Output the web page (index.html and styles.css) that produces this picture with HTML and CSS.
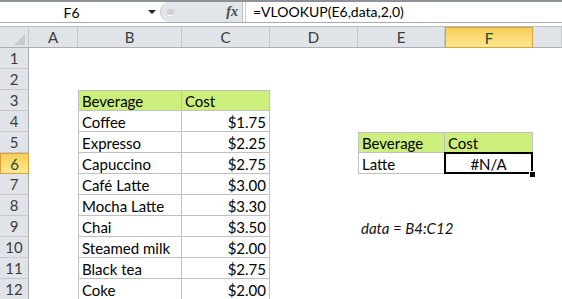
FILE: index.html
```html
<!DOCTYPE html>
<html lang="en">

<head>
    <meta charset="UTF-8">
    <title>VLOOKUP #N/A</title>
    <link rel="stylesheet" href="styles.css">
</head>

<body>
    <div class="frame-top"></div>

    <div class="formula-bar">
        <div class="name-box">
            <span class="name">F6</span>
            <span class="caret"></span>
        </div>
        <div class="fx-area">
            <span class="knob"></span>
            <span class="fx">fx</span>
        </div>
        <div class="formula">=VLOOKUP(E6,data,2,0)</div>
    </div>
    <div class="bar-gap"></div>

    <table class="sheet">
        <colgroup>
            <col class="c-rh">
            <col class="c-a">
            <col class="c-b">
            <col class="c-c">
            <col class="c-d">
            <col class="c-e">
            <col class="c-f">
            <col>
        </colgroup>
        <thead>
            <tr>
                <th class="corner"><span class="corner-mark"></span></th>
                <th>A</th>
                <th>B</th>
                <th>C</th>
                <th>D</th>
                <th>E</th>
                <th class="picked">F</th>
                <th></th>
            </tr>
        </thead>
        <tbody>
            <tr>
                <th>1</th><td></td><td></td><td></td><td></td><td></td><td></td><td></td>
            </tr>
            <tr>
                <th>2</th><td></td><td></td><td></td><td></td><td></td><td></td><td></td>
            </tr>
            <tr>
                <th>3</th><td></td>
                <td class="tb tb-l tb-t hd">Beverage</td>
                <td class="tb tb-t hd">Cost</td>
                <td></td><td></td><td></td><td></td>
            </tr>
            <tr>
                <th>4</th><td></td>
                <td class="tb tb-l">Coffee</td>
                <td class="tb num">$1.75</td>
                <td></td><td></td><td></td><td></td>
            </tr>
            <tr>
                <th>5</th><td></td>
                <td class="tb tb-l">Expresso</td>
                <td class="tb num">$2.25</td>
                <td></td>
                <td class="tb tb-l tb-t hd">Beverage</td>
                <td class="tb tb-t hd">Cost</td>
                <td></td>
            </tr>
            <tr>
                <th class="picked">6</th><td></td>
                <td class="tb tb-l">Capuccino</td>
                <td class="tb num">$2.75</td>
                <td></td>
                <td class="tb tb-l">Latte</td>
                <td class="tb cur">#N/A</td>
                <td></td>
            </tr>
            <tr>
                <th>7</th><td></td>
                <td class="tb tb-l">Café Latte</td>
                <td class="tb num">$3.00</td>
                <td></td><td></td><td></td><td></td>
            </tr>
            <tr>
                <th>8</th><td></td>
                <td class="tb tb-l">Mocha Latte</td>
                <td class="tb num">$3.30</td>
                <td></td><td></td><td></td><td></td>
            </tr>
            <tr>
                <th>9</th><td></td>
                <td class="tb tb-l">Chai</td>
                <td class="tb num">$3.50</td>
                <td></td>
                <td class="note">data = B4:C12</td>
                <td></td><td></td>
            </tr>
            <tr>
                <th>10</th><td></td>
                <td class="tb tb-l">Steamed milk</td>
                <td class="tb num">$2.00</td>
                <td></td><td></td><td></td><td></td>
            </tr>
            <tr>
                <th>11</th><td></td>
                <td class="tb tb-l">Black tea</td>
                <td class="tb num">$2.75</td>
                <td></td><td></td><td></td><td></td>
            </tr>
            <tr>
                <th>12</th><td></td>
                <td class="tb tb-l">Coke</td>
                <td class="tb num">$2.00</td>
                <td></td><td></td><td></td><td></td>
            </tr>
        </tbody>
    </table>
</body>

</html>
```

FILE: styles.css
```css
body {
    margin: 0;
    background-color: #fff;
    font-family: "Lato", "Liberation Sans", sans-serif;
    color: #000;
    overflow: hidden;
}

.frame-top {
    height: 2px;
    background-color: #8d9299;
}

/* formula bar */
.formula-bar {
    display: flex;
    height: 20px;
}

.name-box {
    width: 160px;
    display: flex;
    align-items: center;
}

.name-box .name {
    flex: 0 0 143px;
    text-align: center;
    font-size: 14px;
}

.name-box .caret {
    width: 0;
    height: 0;
    margin-left: 5px;
    border-left: 4px solid transparent;
    border-right: 4px solid transparent;
    border-top: 4px solid #222;
}

.fx-area {
    width: 83px;
    box-sizing: border-box;
    display: flex;
    align-items: center;
    justify-content: space-between;
    padding: 0 4px 0 6px;
    background-color: #e2e5e9;
    border-left: 1px solid #c3c7cc;
    border-right: 1px solid #b9bdc2;
    border-radius: 10px 0 0 10px;
}

.knob {
    width: 7px;
    height: 6px;
    border-radius: 2px;
    background-color: #cfd2d6;
    border-bottom: 1px solid #fff;
}

.fx {
    font-family: "Liberation Serif", serif;
    font-style: italic;
    font-weight: bold;
    font-size: 14px;
    color: #4a4a4a;
}

.formula {
    flex: 1;
    margin-left: 2px;
    padding-left: 7px;
    border-left: 1px solid #c5c9ce;
    font-size: 14px;
    line-height: 20px;
}

.bar-gap {
    height: 3px;
    border-top: 1px solid #a7acb2;
    border-bottom: 1px solid #b9bdc2;
}

/* grid */
.sheet {
    width: 562px;
    table-layout: fixed;
    border-collapse: separate;
    border-spacing: 0;
    font-size: 15px;
}

.c-rh { width: 29px; }
.c-a { width: 49px; }
.c-b { width: 104px; }
.c-c { width: 88px; }
.c-d { width: 88px; }
.c-e { width: 87px; }
.c-f { width: 88px; }

.sheet tr {
    height: 21px;
}

.sheet th {
    padding: 0;
    font-weight: normal;
    color: #3c3c3c;
    background-color: #e0e3e8;
    border-right: 1px solid #c5c9ce;
    border-bottom: 1px solid #c5c9ce;
    text-align: center;
    vertical-align: middle;
}

.sheet thead th {
    border-bottom-color: #a9aeb4;
}

.sheet tbody th {
    border-right-color: #a9aeb4;
}

.sheet .corner {
    text-align: right;
    vertical-align: bottom;
    padding: 0 3px 2px 0;
    line-height: 0;
}

.corner-mark {
    display: inline-block;
    width: 0;
    height: 0;
    border-left: 11px solid transparent;
    border-bottom: 11px solid #c6cace;
}

.sheet th.picked {
    color: #1e4a37;
    background: linear-gradient(#f8cf58, #ffe892);
    border: 1px solid #dea03b;
}

.sheet td {
    padding: 0 3px;
    line-height: 18px;
    white-space: nowrap;
    vertical-align: bottom;
}

.tb {
    border-right: 1px solid #c0c0c0;
    border-bottom: 1px solid #c0c0c0;
}

.tb-l {
    border-left: 1px solid #c0c0c0;
}

.tb-t {
    border-top: 1px solid #c0c0c0;
}

.hd {
    background-color: #ccef7b;
}

.num {
    text-align: right;
}

.note {
    font-style: italic;
    color: #111;
}

/* active cell */
.sheet td.cur {
    position: relative;
    text-align: center;
}

.cur::after {
    content: "";
    position: absolute;
    top: -1px;
    left: -1px;
    right: -1px;
    bottom: -1px;
    border: 2px solid #000;
}

.cur::before {
    content: "";
    position: absolute;
    right: -3px;
    bottom: -4px;
    width: 5px;
    height: 5px;
    background-color: #000;
    border-left: 1px solid #fff;
    border-top: 1px solid #fff;
    z-index: 1;
}
```
